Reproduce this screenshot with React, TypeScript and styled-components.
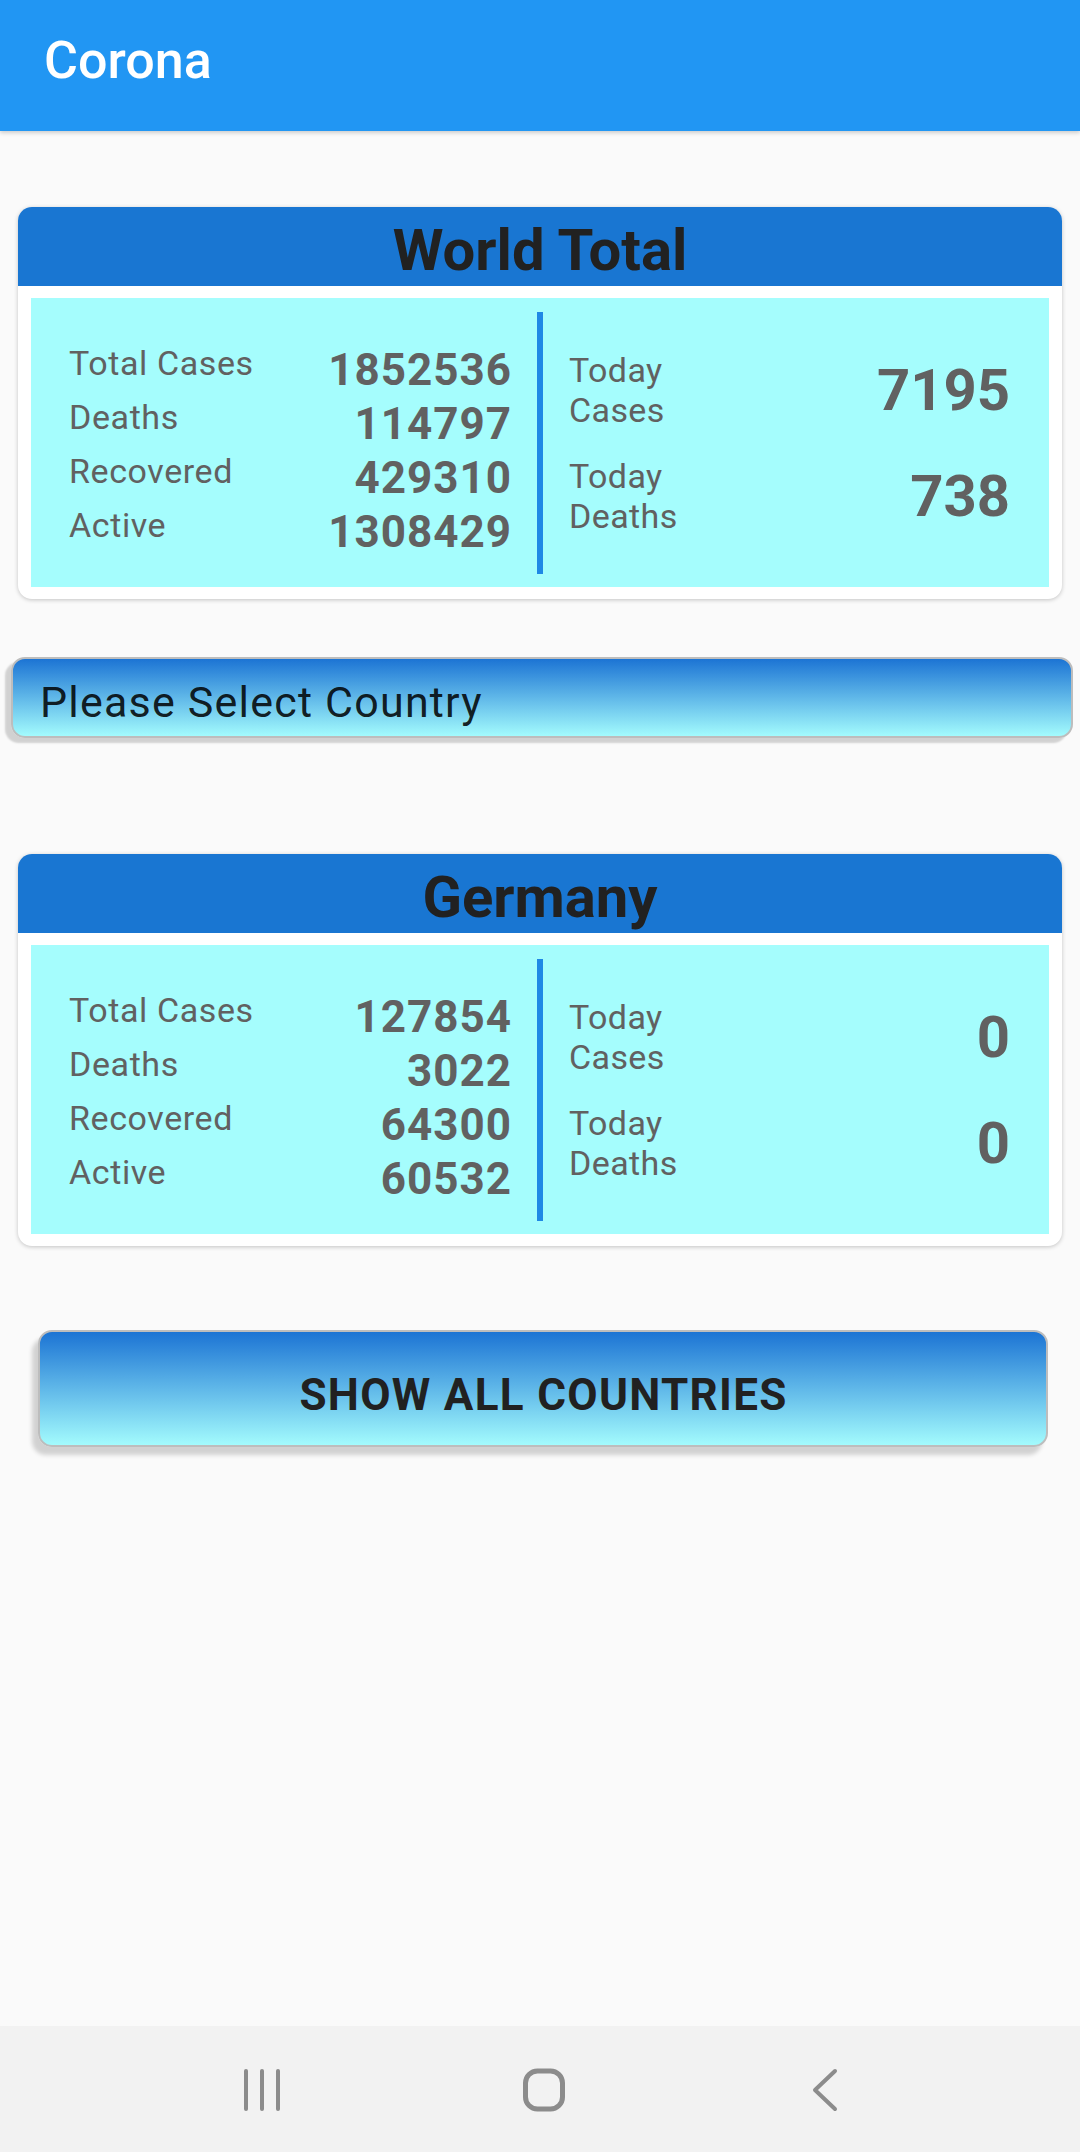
import React from 'react';
import styled, { createGlobalStyle } from 'styled-components';

const Global = createGlobalStyle`
  html, body { margin: 0; padding: 0; background: #FAFAFA; }
  body { font-family: Roboto, "Noto Sans", Arial, sans-serif; }
  * { box-sizing: border-box; }
`;

const Screen = styled.div`
  width: 1080px;
  height: 2152px;
  display: flex;
  flex-direction: column;
  background: #FAFAFA;
  overflow: hidden;
`;

const AppBar = styled.header`
  height: 131px;
  flex-shrink: 0;
  background: #2196F3;
  padding: 30px 0 0 44px;
  box-shadow: 0 2px 4px rgba(0, 0, 0, 0.18);
  position: relative;
  z-index: 1;
`;

const AppTitle = styled.h1`
  margin: 0;
  font-family: Roboto, sans-serif;
  font-size: 52px;
  font-weight: 500;
  line-height: normal;
  color: #ffffff;
`;

const Content = styled.main`
  flex: 1;
  display: flex;
  flex-direction: column;
  padding: 76px 18px 0;
`;

const Card = styled.section<{ $top: number }>`
  margin-top: ${(p) => p.$top}px;
  background: #ffffff;
  border-radius: 14px;
  overflow: hidden;
  padding-bottom: 12px;
  box-shadow: 0 1px 4px rgba(0, 0, 0, 0.22);
`;

const CardHeader = styled.div`
  height: 79px;
  padding-top: 9px;
  background: #1976D2;
  text-align: center;
  font-size: 58px;
  font-weight: 700;
  line-height: 68px;
  color: #212121;
`;

const Stats = styled.div`
  margin: 12px 13px 0;
  height: 289px;
  background: #A5FDFD;
  display: flex;
`;

const LeftCol = styled.div`
  width: 506px;
  padding: 17px 26px 0 38px;
  display: flex;
  flex-direction: column;
  justify-content: center;
`;

const Row = styled.div`
  height: 54px;
  display: flex;
  justify-content: space-between;
  align-items: flex-start;
`;

const Label = styled.span`
  font-size: 34px;
  line-height: 40px;
  letter-spacing: 0.6px;
  color: #616161;
`;

const Value = styled.span`
  font-size: 44px;
  font-weight: 700;
  line-height: 54px;
  letter-spacing: 1px;
  margin-right: -1px;
  color: #616161;
`;

const Divider = styled.div`
  width: 6px;
  margin: 14px 0 13px;
  background: #1E88E5;
`;

const RightCol = styled.div`
  flex: 1;
  padding: 0 39px 0 26px;
  display: flex;
  flex-direction: column;
  justify-content: center;
  gap: 26px;
`;

const TodayRow = styled.div`
  display: flex;
  justify-content: space-between;
  align-items: center;
`;

const TodayLabel = styled.div`
  font-size: 34px;
  line-height: 40px;
  letter-spacing: 0.4px;
  color: #616161;
`;

const TodayValue = styled.span`
  font-size: 58px;
  font-weight: 700;
  line-height: 68px;
  color: #616161;
`;

const Spinner = styled.div`
  margin: 58px -11px 0 -7px;
  height: 81px;
  border: 2px solid #BDBDBD;
  border-radius: 14px;
  background: linear-gradient(180deg, #1C74D4 0%, #A3FBFD 100%);
  box-shadow: -6px 5px 2px rgba(0, 0, 0, 0.16);
  padding: 18px 0 0 27px;
  font-size: 43px;
  letter-spacing: 1.2px;
  line-height: normal;
  color: rgba(0, 0, 0, 0.87);
`;

const ActionButton = styled.button`
  margin: 84px 14px 0 20px;
  height: 117px;
  border: 2px solid #BDBDBD;
  border-radius: 14px;
  background: linear-gradient(180deg, #1C74D4 0%, #A3FBFD 100%);
  box-shadow: -6px 8px 4px rgba(0, 0, 0, 0.16);
  padding: 12px 0 0 1px;
  font-family: Roboto, sans-serif;
  font-size: 44px;
  font-weight: 700;
  letter-spacing: 1.3px;
  line-height: normal;
  color: #212121;
  cursor: pointer;
`;

const NavBar = styled.nav`
  height: 126px;
  flex-shrink: 0;
  background: #F2F2F2;
  display: flex;
  justify-content: center;
  align-items: center;
  gap: 222px;
  padding: 2px 0 0 8px;
`;

const NavIcon = styled.svg`
  width: 60px;
  height: 60px;
  stroke: #8C8C8C;
  fill: none;
  stroke-linecap: round;
  stroke-linejoin: round;
`;

type Stat = { label: string; value: string };

const StatsCard = ({
  title,
  top,
  rows,
  todayCases,
  todayDeaths,
}: {
  title: string;
  top: number;
  rows: Stat[];
  todayCases: string;
  todayDeaths: string;
}) => (
  <Card $top={top}>
    <CardHeader>{title}</CardHeader>
    <Stats>
      <LeftCol>
        {rows.map((r) => (
          <Row key={r.label}>
            <Label>{r.label}</Label>
            <Value>{r.value}</Value>
          </Row>
        ))}
      </LeftCol>
      <Divider />
      <RightCol>
        <TodayRow>
          <TodayLabel>
            Today
            <br />
            Cases
          </TodayLabel>
          <TodayValue>{todayCases}</TodayValue>
        </TodayRow>
        <TodayRow>
          <TodayLabel>
            Today
            <br />
            Deaths
          </TodayLabel>
          <TodayValue>{todayDeaths}</TodayValue>
        </TodayRow>
      </RightCol>
    </Stats>
  </Card>
);

export default function App() {
  return (
    <>
      <Global />
      <Screen>
        <AppBar>
          <AppTitle>Corona</AppTitle>
        </AppBar>
        <Content>
          <StatsCard
            title="World Total"
            top={0}
            rows={[
              { label: 'Total Cases', value: '1852536' },
              { label: 'Deaths', value: '114797' },
              { label: 'Recovered', value: '429310' },
              { label: 'Active', value: '1308429' },
            ]}
            todayCases="7195"
            todayDeaths="738"
          />
          <Spinner>Please Select Country</Spinner>
          <StatsCard
            title="Germany"
            top={116}
            rows={[
              { label: 'Total Cases', value: '127854' },
              { label: 'Deaths', value: '3022' },
              { label: 'Recovered', value: '64300' },
              { label: 'Active', value: '60532' },
            ]}
            todayCases="0"
            todayDeaths="0"
          />
          <ActionButton>SHOW ALL COUNTRIES</ActionButton>
        </Content>
        <NavBar>
          <NavIcon viewBox="0 0 60 60" strokeWidth={4}>
            <line x1="14" y1="11" x2="14" y2="49" />
            <line x1="30" y1="11" x2="30" y2="49" />
            <line x1="46" y1="11" x2="46" y2="49" />
          </NavIcon>
          <NavIcon viewBox="0 0 60 60" strokeWidth={5}>
            <rect x="11.5" y="11" width="37" height="38" rx="12" />
          </NavIcon>
          <NavIcon viewBox="0 0 60 60" strokeWidth={4}>
            <polyline points="39,11 19,30 39,49" />
          </NavIcon>
        </NavBar>
      </Screen>
    </>
  );
}
